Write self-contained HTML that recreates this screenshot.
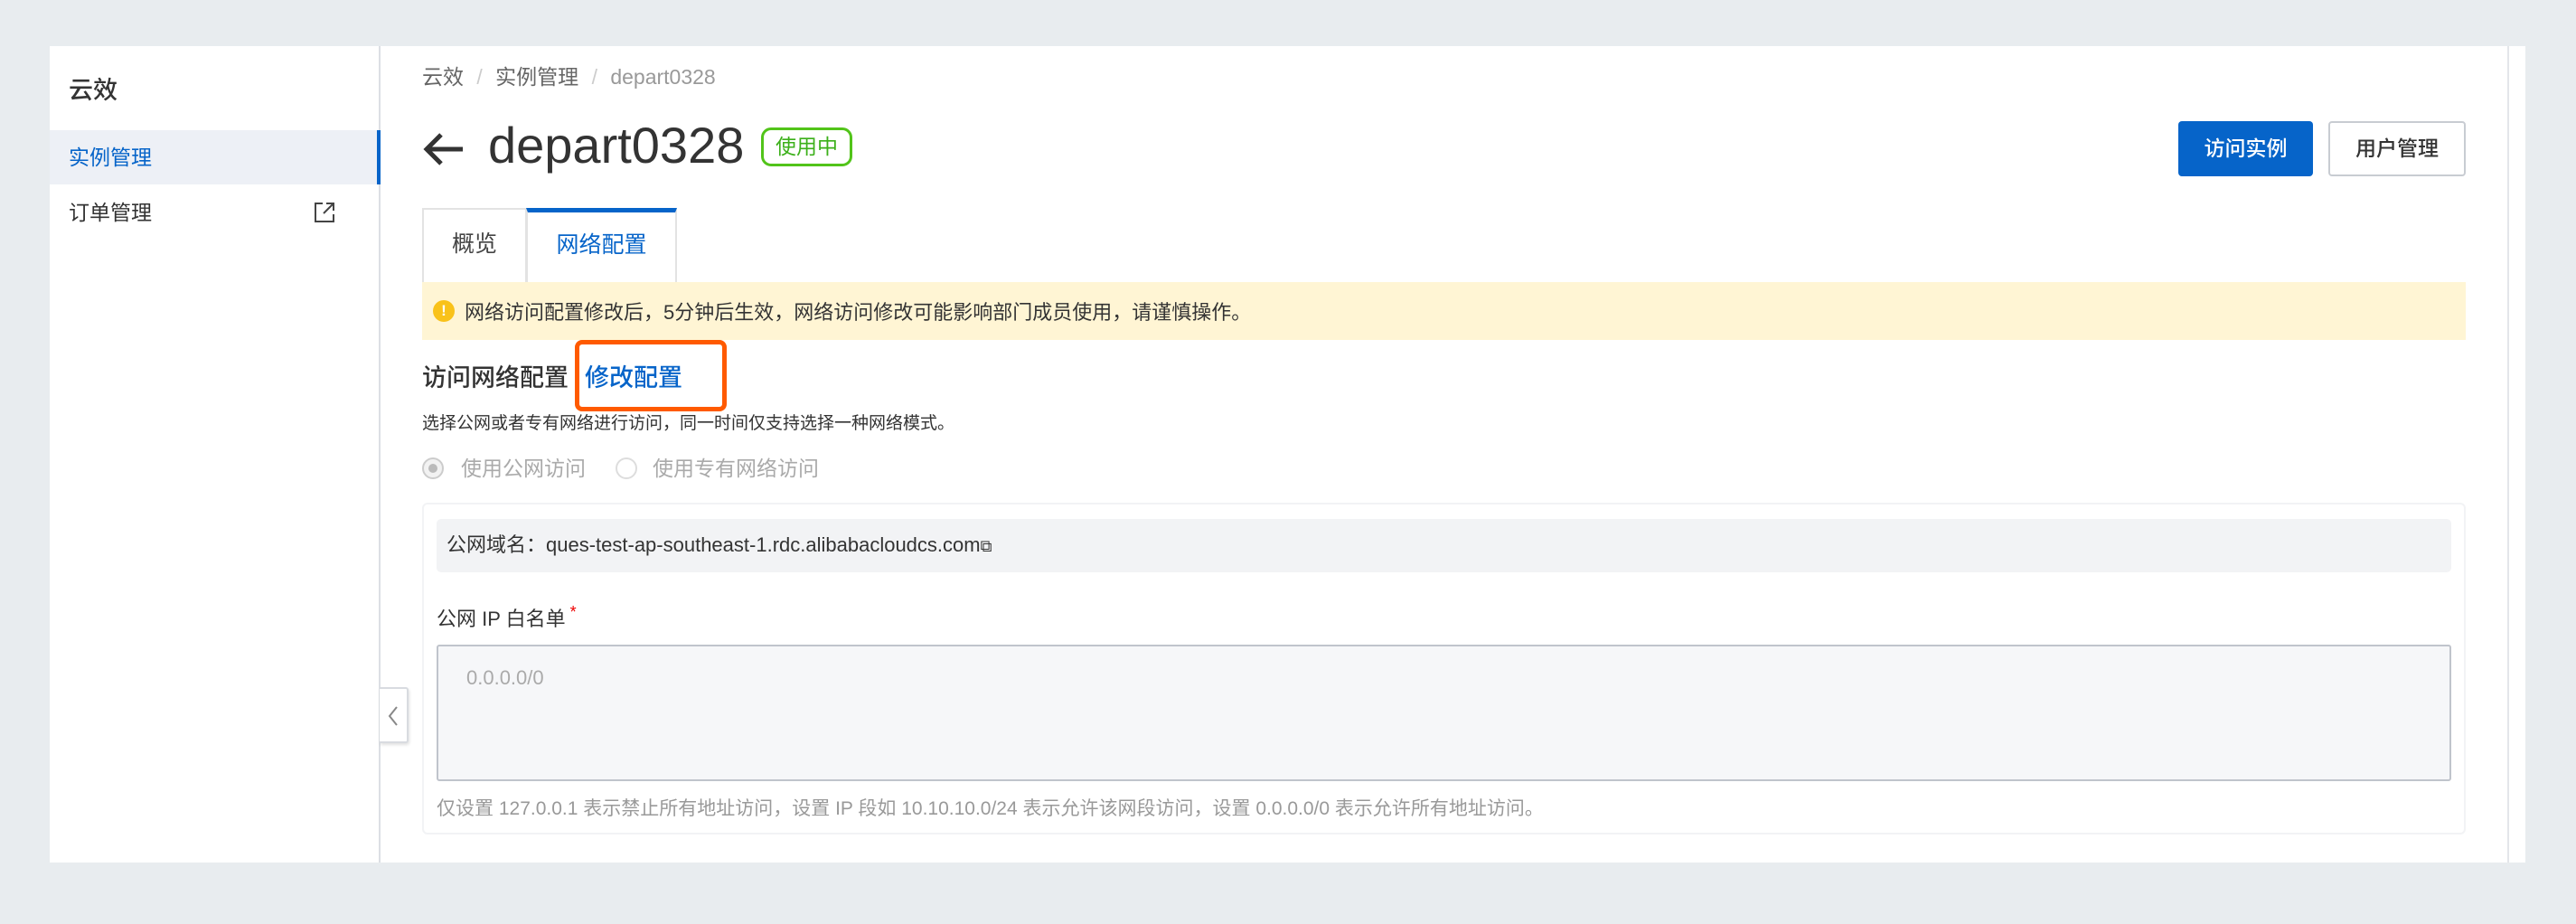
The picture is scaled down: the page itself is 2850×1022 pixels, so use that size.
<!DOCTYPE html>
<html><head><meta charset="utf-8"><style>
*{box-sizing:border-box;margin:0;padding:0}
body{width:2850px;height:1022px;background:#e8ecef;font-family:"Liberation Sans","Noto Sans CJK SC",sans-serif;color:#333;position:relative;overflow:hidden}
.abs{position:absolute;white-space:nowrap}
.card{position:absolute;left:55px;top:51px;width:2739px;height:903px;background:#fff}
</style></head><body>
<div class="card"></div>
<div class="abs" style="left:2774px;top:51px;width:2px;height:903px;background:#e4e6ea"></div>
<div class="abs" style="left:419px;top:51px;width:2px;height:903px;background:#dcdfe4"></div>
<div class="abs" style="left:76px;top:78px;font-size:27px;color:#333;font-weight:500">云效</div>
<div class="abs" style="left:55px;top:144px;width:366px;height:60px;background:#edf0f6"></div>
<div class="abs" style="left:417px;top:144px;width:4px;height:60px;background:#0664c9"></div>
<div class="abs" style="left:76px;top:155px;font-size:23px;color:#0664c9">实例管理</div>
<div class="abs" style="left:76px;top:216px;font-size:23px;color:#333">订单管理</div>
<svg class="abs" style="left:346px;top:222px" width="26" height="26" viewBox="0 0 26 26"><path d="M11 3H3v20h20v-8" fill="none" stroke="#444" stroke-width="2"/><path d="M15 3h8v8M23 3L12 14" fill="none" stroke="#444" stroke-width="2"/></svg>
<div class="abs" style="left:467px;top:66px;font-size:23px;color:#666">云效 <span style="color:#ccc;margin:0 8px">/</span> 实例管理 <span style="color:#ccc;margin:0 8px">/</span> <span style="color:#999">depart0328</span></div>
<svg class="abs" style="left:466px;top:145px" width="48" height="40" viewBox="0 0 48 40"><path d="M46 20H6M22 4L6 20l16 16" fill="none" stroke="#333" stroke-width="5"/></svg>
<div class="abs" style="left:540px;top:126px;font-size:56px;color:#333;line-height:70px">depart0328</div>
<div class="abs" style="left:842px;top:141px;width:101px;height:43px;border:3px solid #52c41a;border-radius:11px;color:#3cb01a;font-size:23px;text-align:center;line-height:37px">使用中</div>
<div class="abs" style="left:2410px;top:134px;width:149px;height:61px;background:#0664c9;border-radius:4px;color:#fff;font-size:23px;text-align:center;line-height:61px;font-weight:500">访问实例</div>
<div class="abs" style="left:2576px;top:134px;width:152px;height:61px;border:2px solid #c8ccd2;border-radius:4px;color:#333;font-size:23px;text-align:center;line-height:57px;font-weight:500">用户管理</div>
<div class="abs" style="left:467px;top:230px;width:116px;height:83px;border:2px solid #e3e3e3;border-bottom:none;font-size:25px;text-align:center;line-height:76px;color:#444">概览</div>
<div class="abs" style="left:582px;top:230px;width:167px;height:83px;border:2px solid #e3e3e3;border-top:5px solid #0664c9;border-bottom:none;font-size:25px;text-align:center;line-height:72px;color:#0664c9;background:#fff">网络配置</div>
<div class="abs" style="left:467px;top:312px;width:2261px;height:64px;background:#fff5d4"></div>
<div class="abs" style="left:479px;top:332px;width:24px;height:24px;border-radius:50%;background:#f9c21a;color:#fff;font-size:17px;text-align:center;line-height:24px;font-weight:bold">!</div>
<div class="abs" style="left:514px;top:328px;font-size:22px;color:#333">网络访问配置修改后，5分钟后生效，网络访问修改可能影响部门成员使用，请谨慎操作。</div>
<div class="abs" style="left:636px;top:376px;width:168px;height:79px;border:5px solid #ff5a00;border-radius:8px"></div>
<div class="abs" style="left:467px;top:396px;font-size:27px;color:#333;font-weight:500">访问网络配置</div>
<div class="abs" style="left:647px;top:396px;font-size:27px;color:#0664c9;font-weight:500">修改配置</div>
<div class="abs" style="left:467px;top:453px;font-size:19px;color:#333">选择公网或者专有网络进行访问，同一时间仅支持选择一种网络模式。</div>
<div class="abs" style="left:467px;top:506px;width:24px;height:24px;border-radius:50%;border:2px solid #ccc;background:#f2f2f2"></div>
<div class="abs" style="left:474px;top:513px;width:10px;height:10px;border-radius:50%;background:#bbb"></div>
<div class="abs" style="left:510px;top:499px;font-size:23px;color:#aaa">使用公网访问</div>
<div class="abs" style="left:681px;top:506px;width:24px;height:24px;border-radius:50%;border:2px solid #ddd;background:#fff"></div>
<div class="abs" style="left:722px;top:499px;font-size:23px;color:#aaa">使用专有网络访问</div>
<div class="abs" style="left:467px;top:556px;width:2261px;height:367px;border:2px solid #f2f3f5;border-radius:6px"></div>
<div class="abs" style="left:483px;top:574px;width:2229px;height:59px;background:#f2f3f5;border-radius:5px"></div>
<div class="abs" style="left:494px;top:585px;font-size:22px;color:#333">公网域名：ques-test-ap-southeast-1.rdc.alibabacloudcs.com<span style="font-size:18px">⧉</span></div>
<div class="abs" style="left:483px;top:667px;font-size:22px;color:#333">公网 IP 白名单<span style="color:#e00;font-size:18px;vertical-align:top"> *</span></div>
<div class="abs" style="left:483px;top:713px;width:2229px;height:151px;background:#f6f7f9;border:2px solid #c0c4cc;border-radius:3px"></div>
<div class="abs" style="left:516px;top:737px;font-size:22px;color:#aaa">0.0.0.0/0</div>
<div class="abs" style="left:483px;top:878px;font-size:21px;color:#999">仅设置 127.0.0.1 表示禁止所有地址访问，设置 IP 段如 10.10.10.0/24 表示允许该网段访问，设置 0.0.0.0/0 表示允许所有地址访问。</div>
<div class="abs" style="left:420px;top:760px;width:32px;height:62px;background:#fff;border:2px solid #d8dbe0;border-left:none;border-radius:0 3px 3px 0;box-shadow:1px 2px 3px rgba(0,0,0,.12)"></div>
<svg class="abs" style="left:428px;top:780px" width="14" height="24" viewBox="0 0 14 24"><path d="M11 2L3 12l8 10" fill="none" stroke="#888" stroke-width="2"/></svg>
</body></html>
